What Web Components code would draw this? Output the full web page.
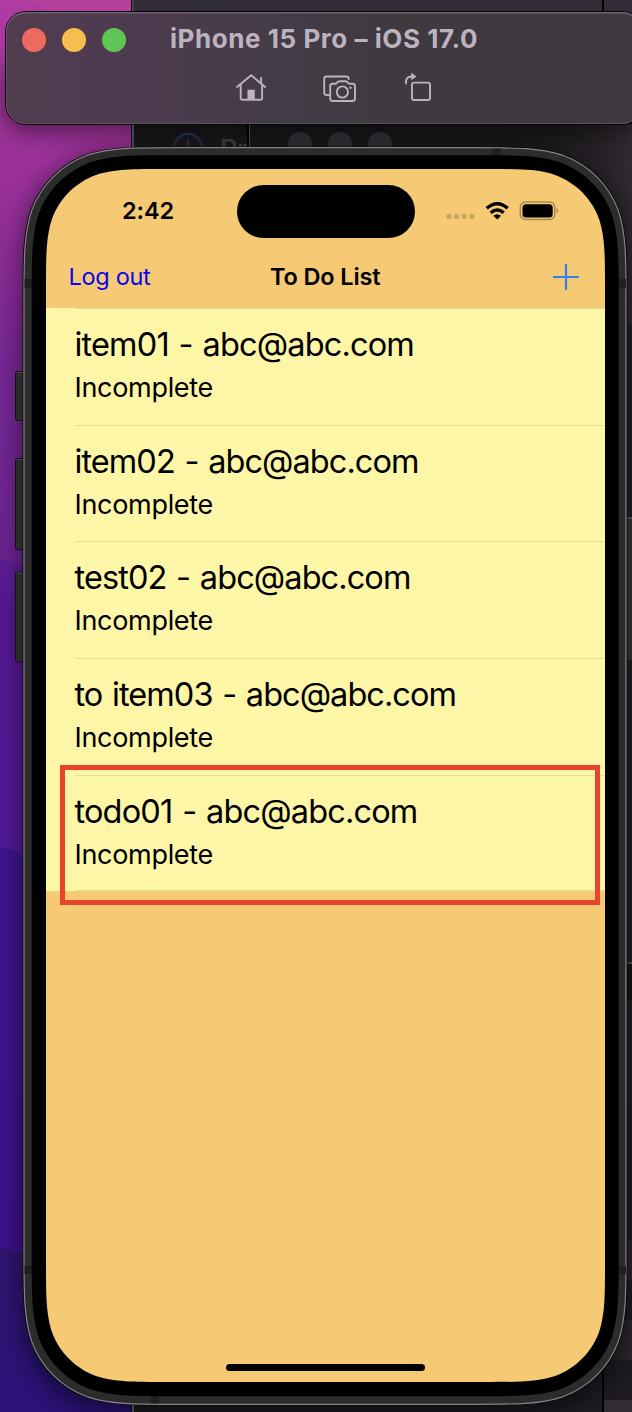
<!DOCTYPE html>
<html lang="en">
<head>
<meta charset="utf-8">
<title>Simulator</title>
<style>
html,body{margin:0;height:1412px;width:632px;overflow:hidden;background:#1c191e;font-family:Inter,"Liberation Sans",sans-serif}
</style>
</head>
<body>
<desk-top>
  <sim-toolbar>iPhone 15 Pro – iOS 17.0</sim-toolbar>
  <phone-device>
    <status-bar time="2:42"></status-bar>
    <nav-bar action="Log out">To Do List</nav-bar>
    <todo-list>
      <todo-item label="item01 - abc@abc.com" fit="339.5">Incomplete</todo-item>
      <todo-item label="item02 - abc@abc.com" fit="344">Incomplete</todo-item>
      <todo-item label="test02 - abc@abc.com" fit="336">Incomplete</todo-item>
      <todo-item label="to item03 - abc@abc.com" fit="381.5">Incomplete</todo-item>
      <todo-item label="todo01 - abc@abc.com" fit="343" marked>Incomplete</todo-item>
    </todo-list>
  </phone-device>
</desk-top>
<script>
class Base extends HTMLElement{
  constructor(){super();this.attachShadow({mode:'open'});}
  connectedCallback(){this.shadowRoot.innerHTML=this.view();this.ready&&this.ready();}
}
const def=(n,c)=>customElements.define(n,c);

/* Rounded rectangle with continuous-curvature corners. */
function squircle(x,y,w,h,r){
  const k=[1.52866,1.08849,.86841,.63149,.07491,.37282,.16906].map(v=>v*r);
  const [a,b,c,d,e,f,g]=k,R=x+w,B=y+h;
  return `M${x+a} ${y}L${R-a} ${y}C${R-b} ${y} ${R-c} ${y} ${R-d} ${y+e}C${R-f} ${y+g} ${R-g} ${y+f} ${R-e} ${y+d}C${R} ${y+c} ${R} ${y+b} ${R} ${y+a}`+
  `L${R} ${B-a}C${R} ${B-b} ${R} ${B-c} ${R-e} ${B-d}C${R-g} ${B-f} ${R-f} ${B-g} ${R-d} ${B-e}C${R-c} ${B} ${R-b} ${B} ${R-a} ${B}`+
  `L${x+a} ${B}C${x+b} ${B} ${x+c} ${B} ${x+d} ${B-e}C${x+f} ${B-g} ${x+g} ${B-f} ${x+e} ${B-d}C${x} ${B-c} ${x} ${B-b} ${x} ${B-a}`+
  `L${x} ${y+a}C${x} ${y+b} ${x} ${y+c} ${x+e} ${y+d}C${x+g} ${y+f} ${x+f} ${y+g} ${x+d} ${y+e}C${x+c} ${y} ${x+b} ${y} ${x+a} ${y}Z`;
}

/* Text tracked so that its advance equals the given width. */
def('fit-text',class extends Base{
  view(){return `<style>:host{display:block;white-space:nowrap}span{display:inline-block}</style><span><slot></slot></span>`}
  ready(){
    const s=this.shadowRoot.querySelector('span'),n=this.textContent.trim().length;
    s.style.letterSpacing='0px';
    const w=s.getBoundingClientRect().width;
    if(w)s.style.letterSpacing=((+this.getAttribute('width')-w)/n)+'px';
  }
});

def('desk-top',class extends Base{
  view(){return `<style>
  :host{display:block;position:relative;width:632px;height:1412px;overflow:hidden}
  svg.bg{position:absolute;inset:0}
  .stack{position:relative;display:flex;flex-direction:column;gap:22px;padding:12px 0 0 5px}
  </style>
  <svg class="bg" width="632" height="1412">
    <defs>
      <linearGradient id="w" x2="0" y2="1"><stop offset="0" stop-color="#b03ba3"/><stop offset=".12" stop-color="#9c319a"/><stop offset=".26" stop-color="#762793"/><stop offset=".4" stop-color="#6a2390"/><stop offset=".43" stop-color="#581b92"/><stop offset=".6" stop-color="#561b97"/></linearGradient>
      <linearGradient id="w2" x2="0" y2="1"><stop offset="0" stop-color="#3f158c"/><stop offset="1" stop-color="#3c1188"/></linearGradient>
      <linearGradient id="w3" x2="0" y2="1"><stop offset="0" stop-color="#31146f"/><stop offset="1" stop-color="#2c1379"/></linearGradient>
      <linearGradient id="d" x2="0" y2="1"><stop offset="0" stop-color="#322c37"/><stop offset=".03" stop-color="#2d2833"/><stop offset=".09" stop-color="#19171a"/><stop offset=".12" stop-color="#242026"/><stop offset="1" stop-color="#201c23"/></linearGradient>
      <linearGradient id="r"><stop offset="0" stop-color="#1b181b" stop-opacity="0"/><stop offset="1" stop-color="#302a31"/></linearGradient>
      <filter id="b" x="-20%" y="-60%" width="140%" height="220%"><feGaussianBlur stdDeviation="13"/></filter>
    </defs>
    <rect width="134" height="1412" fill="url(#w)"/>
    <path d="M30 0L50 14H134V0Z" fill="#b53f9d"/>
    <path d="M0 560Q16 562 30 572V860H0Z" fill="#4f1994" opacity=".45"/>
    <path d="M0 847Q14 849 24 856V1412H0Z" fill="url(#w2)"/>
    <path d="M0 1248L40 1256L134 1412H0Z" fill="url(#w3)"/>
    <path d="M24 1256H134V1412H24Z" fill="#2c1379"/>
    <rect x="132" width="500" height="1412" fill="url(#d)"/>
    <rect x="500" y="124" width="132" height="200" fill="url(#r)"/>
    <rect x="627" y="517" width="5" height="143" fill="#363636"/>
    <rect x="627" y="517" width="5" height="2" fill="#5b595d"/>
    <rect x="627" y="962" width="5" height="2" fill="#58555a"/>
    <rect x="627" y="964" width="5" height="36" fill="#141315"/>
    <rect x="627" y="1240" width="5" height="40" fill="#2b262c"/>
    <rect x="602" y="1320" width="30" height="40" fill="#2b262e"/><rect x="602" y="1360" width="30" height="52" fill="#1f1b23"/><rect x="602" y="1400" width="30" height="12" fill="#332d35"/>
    <rect x="602" width="2" height="12" fill="#000"/><rect x="602" y="1360" width="2" height="52" fill="#000"/>
    <path d="${squircle(23,152,604,1262,98)}" fill="#000" opacity=".55" filter="url(#b)"/>
    <rect x="4" y="60" width="634" height="72" rx="22" fill="#000" opacity=".5" filter="url(#b)"/>
    <rect x="131" width="1" height="1412" fill="#09070a"/><rect x="132" width="2" height="1412" fill="#48444b"/>
    <circle cx="188" cy="148" r="14" fill="none" stroke="#1e2b45" stroke-width="2"/><path d="M188 139V148" stroke="#1e2b45" stroke-width="2"/>
    <text x="220" y="159" font-family="Inter" font-weight="500" font-size="27" fill="#39363b">Pr</text>
    <rect x="247" y="124" width="3" height="30" fill="#000"/><rect x="249" y="124" width="1" height="30" fill="#454147"/>
    <g fill="#2b262b"><circle cx="300" cy="144" r="12"/><circle cx="340" cy="144" r="12"/><circle cx="380" cy="144" r="12"/></g>
  </svg>
  <div class="stack"><slot></slot></div>`}
});

def('sim-toolbar',class extends Base{
  view(){return `<style>
  :host{display:flex;flex-direction:column;box-sizing:border-box;width:636px;height:112px;margin-left:1px;border-radius:20px;background:linear-gradient(90deg,#523c50 0,#4e3b50 120px,#443c47 260px,#3f3940 380px,#3e383f);box-shadow:0 0 0 1px #080608,inset 0 1.5px 0 #6a646b,inset 0 0 0 1px #5b535c;color:#bcb3bf}
  header{display:flex;align-items:center;height:56px;padding-left:16px}
  .lights{display:flex;gap:16px;width:148px}
  i{width:24px;height:24px;border-radius:50%}
  fit-text{font-weight:700;font-size:26px;line-height:40px;margin-top:-3px}
  nav{display:flex;padding:3px 0 0 227px;gap:50px}
  svg{display:block;fill:none;stroke:#bcb3bf;stroke-width:1.9;stroke-linecap:round;stroke-linejoin:round}
  </style>
  <header><div class="lights"><i style="background:#ee6a5f"></i><i style="background:#f5bf4f"></i><i style="background:#61c554"></i></div><fit-text width="308"><slot></slot></fit-text></header>
  <nav>
    <svg width="36" height="34" viewBox="233 71 36 34"><path d="M237 87L251.2 75.3L265.2 87M240.7 84.5V98Q240.7 99.8 242.5 99.8H260.3Q262.1 99.8 262.1 98V84.5M261.1 83V78"/><path d="M247.5 99V89.7H254.8V99Z" fill="#bcb3bf" stroke="none"/></svg>
    <svg width="36" height="34" viewBox="321 71 36 34" style="margin-left:2px"><path d="M328.5 95H326.5Q324.2 95 324.2 92.700V78.800Q324.2 76.500 326.500 76.500H346.500Q348.500 76.500 348.800 79"/><path d="M332.500 83.700H335.500Q336.500 83.700 337.200 82.500Q338 81.200 339.500 81.200H345.500Q347 81.200 347.800 82.500Q348.500 83.700 349.500 83.700H352.500Q355 83.700 355 86.200V98.600Q355 101 352.500 101H332.500Q330.200 101 330.200 98.600V86.200Q330.200 83.700 332.500 83.700Z"/><circle cx="342.400" cy="92" r="5.600"/><circle cx="350.300" cy="87.800" r=".8" fill="#bcb3bf" stroke-width="1"/></svg>
    <svg width="36" height="34" viewBox="401 71 36 34" style="margin-left:-6px"><rect x="412" y="82.600" width="18" height="17.400" rx="2"/><path d="M406 83.500V82Q406 77 411 76.500H412"/><path d="M411.800 73.500L416 76.500L411.800 79.500Z" fill="#bcb3bf" stroke-width=".8"/></svg>
  </nav>`}
});

def('phone-device',class extends Base{
  view(){return `<style>
  :host{display:block;position:relative;width:627px;height:1261px}
  svg.frame{position:absolute;left:-5px;top:-2px}
  main{position:relative;display:flex;flex-direction:column;width:559px;height:1213px;margin-left:41px;top:23px;background:#f6c974;clip-path:path("${squircle(0,0,559,1213,79)}");color:#000}
  .home{width:199px;height:7px;border-radius:4px;background:#000;margin:auto 0 11.500px 180px}
  </style>
  <svg class="frame" width="632" height="1268" viewBox="0 144 632 1268">
    <g fill="#2b2b2b" stroke="#111" stroke-width="1"><rect x="15.500" y="371.500" width="14" height="49" rx="2"/><rect x="15.500" y="458.500" width="14" height="91" rx="2"/><rect x="15.500" y="572" width="14" height="90" rx="2"/></g>
    <path d="M17 372.500H23M17 459.500H23M17 573H23" stroke="#4b484c"/>
    <path d="${squircle(22.500,146.500,605,1259,101.500)}" fill="#090909"/>
    <path d="${squircle(24,147.700,602,1256.600,100)}" fill="#2c2c2c" stroke="#858585" stroke-width="1.200"/>
    <g fill="#202020"><rect x="24.500" y="279" width="8" height="9"/><rect x="618" y="279" width="8" height="9"/><rect x="24.500" y="1266" width="8" height="8"/><rect x="618" y="1266" width="8" height="8"/><rect x="492" y="148.500" width="9" height="8"/><rect x="151" y="1396" width="8" height="7.500"/></g>
    <path d="${squircle(31.700,155.200,587,1241,93)}" fill="#000"/>
  </svg>
  <main><slot></slot><div class="home"></div></main>`}
});

def('status-bar',class extends Base{
  view(){return `<style>
  :host{display:flex;height:84px;box-sizing:border-box;padding:15.500px 0 0 76px;align-items:flex-start}
  .t{font-weight:600;font-size:23.500px;line-height:32px;margin-top:10.500px;width:114.500px}
  .island{width:178px;height:53px;border-radius:27px;background:#000}
  svg{margin:20px 0 0 29.500px}
  </style>
  <fit-text class="t" width="52">${this.getAttribute('time')}</fit-text><div class="island"></div>
  <svg width="120" height="26" viewBox="444.500 205.500 120 26" style="margin-top:20px">
    <g fill="#c9a45f"><rect x="447" y="214.500" width="5" height="5" rx="1.800"/><rect x="454.600" y="214.500" width="5" height="5" rx="1.800"/><rect x="462.200" y="214.500" width="5" height="5" rx="1.800"/><rect x="469.800" y="214.500" width="5" height="5" rx="1.800"/></g>
  </svg>
  <svg width="76" height="26" viewBox="484 200 76 26" style="margin:15.500px 0 0 -80.500px">
    <g fill="none" stroke="#000" stroke-width="3.400"><path d="M486.700 208.300Q497.200 199 507.700 208.300"/><path d="M490.700 212.800Q497.200 207.200 503.700 212.800"/></g>
    <path d="M493.300 215.800Q497.200 212.500 501.100 215.800L497.200 219.500Z"/>
    <rect x="520.300" y="202" width="34.500" height="17.500" rx="5.200" fill="none" stroke="#a98b50" stroke-width="1.500"/><rect x="522.500" y="204.200" width="30.200" height="13.200" rx="3.500"/><path d="M556.500 208Q560 210.700 556.500 213.500Z" fill="#a98b50"/>
  </svg>`}
});

def('nav-bar',class extends Base{
  view(){return `<style>
  :host{display:grid;grid-template-columns:201.500px 1fr 52.500px;height:55px;padding-left:22.500px;line-height:48px;font-size:23.500px}
  .a{color:#0505f0}.b{font-weight:600}svg{margin-top:11px}
  </style>
  <fit-text class="a" width="82">${this.getAttribute('action')}</fit-text><fit-text class="b" width="110.500"><slot></slot></fit-text>
  <svg width="26" height="26"><path d="M13 .900V25.100M.900 13H25.100" stroke="#3080f0" stroke-width="2.200" stroke-linecap="round"/></svg>`}
});

def('todo-list',class extends Base{
  view(){return `<style>:host{display:block;background:#fef6a7}</style><slot></slot>`}
});

def('todo-item',class extends Base{
  view(){return `<style>
  :host{display:block;position:relative;box-sizing:border-box;height:116.700px;padding:16.900px 0 0 28.500px}
  .line{position:absolute;left:28.500px;right:0;height:1px;background:#e5dd97;top:0}
  :host([marked]) .end{display:block;top:auto;bottom:0}.end{display:none}
  .name{font-size:32.500px;line-height:40px;word-spacing:1.500px}.state{font-size:27px;line-height:36px;margin-top:5px}
  .mark{display:none;position:absolute;left:13.500px;top:-10.200px;width:530px;height:130px;border:5px solid #e9432a}
  :host([marked]) .mark{display:block}
  </style>
  <div class="line"></div><fit-text class="name" width="${this.getAttribute('fit')}">${this.getAttribute('label')}</fit-text>
  <fit-text class="state" width="138.500"><slot></slot></fit-text><div class="line end"></div><div class="mark"></div>`}
  ready(){
    /* The slotted state text is measured from the host's own content. */
    const s=this.shadowRoot.querySelector('.state');
    const t=s.shadowRoot.querySelector('span');t.style.letterSpacing='0px';
    t.style.letterSpacing=((138.5-t.getBoundingClientRect().width)/this.textContent.trim().length)+'px';
  }
});

/* Slotted labels take their tracking once every element is in place. */
for(const [sel,w] of [['sim-toolbar',308],['nav-bar',110.5]]){
  const h=document.querySelector(sel),f=[...h.shadowRoot.querySelectorAll('fit-text')].pop();
  const t=f.shadowRoot.querySelector('span');t.style.letterSpacing='0px';
  t.style.letterSpacing=((w-t.getBoundingClientRect().width)/h.textContent.trim().length)+'px';
}
</script>
</body>
</html>
